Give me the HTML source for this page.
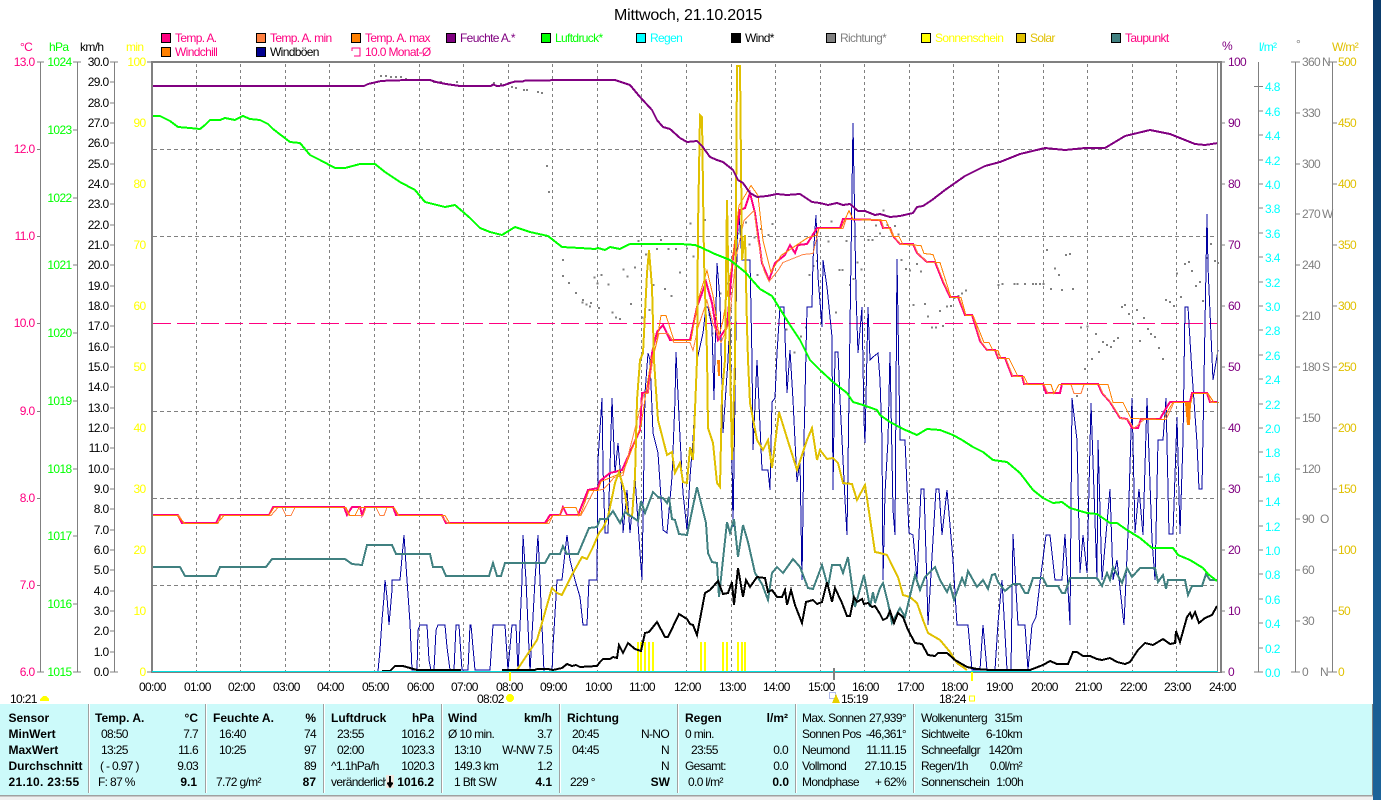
<!DOCTYPE html>
<html><head><meta charset="utf-8"><title>Mittwoch, 21.10.2015</title>
<style>
html,body{margin:0;padding:0;background:#fff;width:1381px;height:800px;overflow:hidden}
svg{display:block;shape-rendering:crispEdges}
text{font-family:"Liberation Sans",sans-serif;font-size:12px;letter-spacing:-.65px;white-space:pre}
.e{text-anchor:end}
.b{font-weight:bold;letter-spacing:0}
.c{letter-spacing:.3px}
.l{fill:none}
</style></head><body>
<svg width="1381" height="800" viewBox="0 0 1381 800" xmlns="http://www.w3.org/2000/svg">
<defs><linearGradient id="dk" x1="0" y1="0" x2="0" y2="1"><stop offset="0" stop-color="#0b3b6b"/><stop offset="1" stop-color="#1b6399"/></linearGradient></defs>
<rect x="1373" y="0" width="8" height="800" fill="url(#dk)"/>

<!-- title -->
<text x="614" y="20" style="font-size:16px;letter-spacing:-.2px" fill="#000">Mittwoch, 21.10.2015</text>

<!-- legend swatches -->
<g stroke="#000" stroke-width="1">
<rect x="161.5" y="33.5" width="9" height="9" fill="#ff0080"/>
<rect x="256.5" y="33.5" width="9" height="9" fill="#ff8040"/>
<rect x="351.5" y="33.5" width="9" height="9" fill="#ff8000"/>
<rect x="446.5" y="33.5" width="9" height="9" fill="#800080"/>
<rect x="541.5" y="33.5" width="9" height="9" fill="#00ff00"/>
<rect x="636.5" y="33.5" width="9" height="9" fill="#00ffff"/>
<rect x="731.5" y="33.5" width="9" height="9" fill="#000"/>
<rect x="826.5" y="33.5" width="9" height="9" fill="#808080"/>
<rect x="921.5" y="33.5" width="9" height="9" fill="#ffff00"/>
<rect x="1016.5" y="33.5" width="9" height="9" fill="#e0c000"/>
<rect x="1111.5" y="33.5" width="9" height="9" fill="#408080"/>
<rect x="161.5" y="47.5" width="9" height="9" fill="#ff8000"/>
<rect x="256.5" y="47.5" width="9" height="9" fill="#000090"/>
</g>
<path class="l" d="M352 51V48H360V56H354" stroke="#ff0080"/>
<g>
<text x="175" y="42" fill="#ff0080">Temp. A.</text>
<text x="270" y="42" fill="#ff0080">Temp. A. min</text>
<text x="365" y="42" fill="#ff0080">Temp. A. max</text>
<text x="460" y="42" fill="#800080">Feuchte A.*</text>
<text x="555" y="42" fill="#00ff00">Luftdruck*</text>
<text x="650" y="42" fill="#00ffff">Regen</text>
<text x="745" y="42" fill="#000">Wind*</text>
<text x="840" y="42" fill="#808080">Richtung*</text>
<text x="935" y="42" fill="#ffff00">Sonnenschein</text>
<text x="1030" y="42" fill="#e0c000">Solar</text>
<text x="1125" y="42" fill="#ff0080">Taupunkt</text>
<text x="175" y="56" fill="#ff0080">Windchill</text>
<text x="270" y="56" fill="#000">Windböen</text>
<text x="365" y="56" fill="#ff0080">10.0 Monat-Ø</text>
</g>

<!-- axis headers -->
<text x="20" y="51" fill="#ff0080">°C</text>
<text x="49" y="51" fill="#00ff00">hPa</text>
<text x="80" y="51" fill="#000">km/h</text>
<text x="126" y="51" fill="#ffff00">min</text>
<text x="1222" y="50" fill="#800080">%</text>
<text x="1259" y="51" fill="#00ffff">l/m²</text>
<text x="1296" y="48" fill="#808080">°</text>
<text x="1332" y="51" fill="#e0c000">W/m²</text>

<!-- left axis lines -->
<g fill="none" stroke="#808080" stroke-width="1">
<path d="M40.5 62V672M37 62H44M37 149.5H40M37 236.5H40M37 323.5H40M37 411.5H40M37 498.5H40M37 585.5H40M37 672H44"/>
<path d="M77.5 62V672M73 62H81M73 130H77M73 198H77M73 265H77M73 333H77M73 401H77M73 469H77M73 536H77M73 604H77M73 672H81"/>
<path d="M114.5 62V672M110 62H118M110 82H114M110 103H114M110 123H114M110 143H114M110 164H114M110 184H114M110 204H114M110 225H114M110 245H114M110 265H114M110 286H114M110 306H114M110 326H114M110 347H114M110 367H114M110 387H114M110 408H114M110 428H114M110 448H114M110 469H114M110 489H114M110 509H114M110 530H114M110 550H114M110 570H114M110 591H114M110 611H114M110 631H114M110 652H114M110 672H118"/>
<path d="M147 62H151M147 672H151"/>
</g>
<g class="e" fill="#ff0080">
<text class="e" x="34.5" y="66">13.0</text><text class="e" x="34.5" y="153">12.0</text><text class="e" x="34.5" y="240">11.0</text><text class="e" x="34.5" y="327">10.0</text><text class="e" x="34.5" y="415">9.0</text><text class="e" x="34.5" y="502">8.0</text><text class="e" x="34.5" y="589">7.0</text><text class="e" x="34.5" y="676">6.0</text>
</g>
<g fill="#00ff00">
<text class="e" x="71.5" y="66">1024</text><text class="e" x="71.5" y="134">1023</text><text class="e" x="71.5" y="202">1022</text><text class="e" x="71.5" y="269">1021</text><text class="e" x="71.5" y="337">1020</text><text class="e" x="71.5" y="405">1019</text><text class="e" x="71.5" y="473">1018</text><text class="e" x="71.5" y="540">1017</text><text class="e" x="71.5" y="608">1016</text><text class="e" x="71.5" y="676">1015</text>
</g>
<g fill="#000">
<text class="e" x="108.5" y="66">30.0</text><text class="e" x="108.5" y="86">29.0</text><text class="e" x="108.5" y="107">28.0</text><text class="e" x="108.5" y="127">27.0</text><text class="e" x="108.5" y="147">26.0</text><text class="e" x="108.5" y="168">25.0</text><text class="e" x="108.5" y="188">24.0</text><text class="e" x="108.5" y="208">23.0</text><text class="e" x="108.5" y="229">22.0</text><text class="e" x="108.5" y="249">21.0</text><text class="e" x="108.5" y="269">20.0</text><text class="e" x="108.5" y="290">19.0</text><text class="e" x="108.5" y="310">18.0</text><text class="e" x="108.5" y="330">17.0</text><text class="e" x="108.5" y="351">16.0</text><text class="e" x="108.5" y="371">15.0</text><text class="e" x="108.5" y="391">14.0</text><text class="e" x="108.5" y="412">13.0</text><text class="e" x="108.5" y="432">12.0</text><text class="e" x="108.5" y="452">11.0</text><text class="e" x="108.5" y="473">10.0</text><text class="e" x="108.5" y="493">9.0</text><text class="e" x="108.5" y="513">8.0</text><text class="e" x="108.5" y="534">7.0</text><text class="e" x="108.5" y="554">6.0</text><text class="e" x="108.5" y="574">5.0</text><text class="e" x="108.5" y="595">4.0</text><text class="e" x="108.5" y="615">3.0</text><text class="e" x="108.5" y="635">2.0</text><text class="e" x="108.5" y="656">1.0</text><text class="e" x="108.5" y="676">0.0</text>
</g>
<g fill="#ffff00">
<text class="e" x="145.5" y="66">100</text><text class="e" x="145.5" y="127">90</text><text class="e" x="145.5" y="188">80</text><text class="e" x="145.5" y="249">70</text><text class="e" x="145.5" y="310">60</text><text class="e" x="145.5" y="371">50</text><text class="e" x="145.5" y="432">40</text><text class="e" x="145.5" y="493">30</text><text class="e" x="145.5" y="554">20</text><text class="e" x="145.5" y="615">10</text><text class="e" x="145.5" y="676">0</text>
</g>

<!-- grid -->
<path class="l" stroke="#808080" stroke-dasharray="3 3" d="M196.5 64V676M240.5 64V676M285.5 64V676M329.5 64V676M374.5 64V676M419.5 64V676M463.5 64V676M508.5 64V676M552.5 64V676M597.5 64V676M641.5 64V676M686.5 64V676M731.5 64V676M775.5 64V676M820.5 64V676M864.5 64V676M909.5 64V676M953.5 64V676M998.5 64V676M1043.5 64V676M1087.5 64V676M1132.5 64V676M1176.5 64V676"/>
<path class="l" stroke="#808080" stroke-dasharray="4 3" d="M153 149.5H1218M153 236.5H1218M153 411.5H1218M153 498.5H1218M153 585.5H1218"/>
<path class="l" stroke="#ff0080" stroke-dasharray="18 6" d="M153 323.5H1218"/>

<!-- richtung dots -->
<g fill="none" stroke="#808080" stroke-width="2">
<path d="M380 76h2M385 76h2M390 77h2M395 77h2M400 77h2M405 79h2M433 82h2M440 82h2M456 82h2M493 83h2M500 84h2M503 85h2M511 87h2M515 88h2M523 90h2M526 90h2M537 92h2M541 93h2M546 166h2M548 192h2M562 260h2M562 276h2M568 283h2M575 293h2M582 300h2M590 303h2M598 308h2"/>
</g>
<path transform="translate(580,60) scale(.3333)" fill="none" stroke="#808080" stroke-width="6" d="M5 728h6M17 733h6M27 740h6M40 653h6M50 670h6M62 645h6M83 673h6M95 758h6M105 773h6M117 777h6M128 629h6M140 650h6M150 732h6M162 623h6M173 543h6M185 773h6M195 584h6M205 750h6M218 675h6M228 567h6M240 540h6M252 687h6M262 567h6M272 708h6M285 567h6M297 638h6M318 565h6M328 490h6M338 590h6M350 635h6M362 705h6M372 480h6M385 765h6M395 820h6M405 765h6M418 700h6M430 760h6M440 670h6M450 745h6M462 570h6M472 520h6M485 573h6M495 488h6M505 553h6M520 533h6M530 645h6M540 507h6M562 525h6M575 492h6M597 752h6M617 808h6M640 878h6M660 830h6M675 803h6M685 645h6M697 618h6M708 603h6M720 760h6M742 545h6M752 485h6M765 758h6M775 630h6M785 630h6M797 543h6M807 675h6M818 657h6M830 608h6M842 628h6M862 540h6M875 540h6M885 497h6M897 520h6"/>
<path transform="translate(880,200) scale(.3333)" fill="none" stroke="#808080" stroke-width="6" d="M8 32h6M20 75h6M42 78h6M53 103h6M62 180h6M75 207h6M87 212h6M98 315h6M108 192h6M120 215h6M132 312h6M141 350h6M153 383h6M165 383h6M177 333h6M186 378h6M198 320h6M210 318h6M220 294h6M232 288h6M243 280h6M255 272h6M353 255h6M365 252h6M400 252h6M410 252h6M432 252h6M456 252h6M465 252h6M477 252h6M488 252h6M498 150h6M510 267h6M522 205h6M534 225h6M543 270h6M555 165h6M567 162h6M576 267h6M588 588h6M600 383h6M612 507h6M620 380h6M633 477h6M645 402h6M654 456h6M666 426h6M678 435h6M690 441h6M699 423h6M711 414h6M723 321h6M732 315h6M744 342h6M756 372h6M768 330h6M777 423h6M789 354h6M801 387h6M810 402h6M822 411h6M834 444h6M846 477h6M855 300h6M867 306h6M879 318h6M888 220h6M900 291h6M912 192h6M924 186h6M933 213h6M945 258h6M957 246h6M966 303h6M978 174h6M990 132h6M1002 183h6M1011 189h6"/>

<!-- sunshine -->
<g fill="#ffff00">
<rect x="637" y="642" width="2" height="30"/><rect x="640" y="642" width="2" height="30"/><rect x="644" y="642" width="2" height="30"/><rect x="648" y="642" width="2" height="30"/><rect x="652" y="642" width="2" height="30"/>
<rect x="700" y="642" width="2" height="30"/><rect x="704" y="642" width="2" height="30"/>
<rect x="722" y="642" width="2" height="30"/><rect x="726" y="642" width="2" height="30"/>
<rect x="737" y="642" width="2" height="30"/><rect x="741" y="642" width="2" height="30"/><rect x="744" y="642" width="2" height="30"/>
</g>

<!-- gusts -->
<polyline class="l" stroke="#0000a0" stroke-width="1" points="378,671 380,650 382,620 384,597 385,580 387,597 389,625 392,590 392,580 400,580 404,535 407,580 410,623 412,670 417,670 418,630 420,625 427,625 429,660 431,670 434,670 436,630 438,625 445,625 447,647 450,670 454,670 456,625 459,625 462,670 468,670 470,625 471,625 475,670 490,670 493,625 505,625 508,670 510,647 512,625 516,625 518,672 522,580 523,535 526,580 530,672 535,580 538,535 540,580 544,672 552,672 553,647 557,580 562,580 567,535 570,560 575,580 580,597 583,625 587,625 589,580 597,580 598,460 602,398 603,467 605,533 608,533 610,467 612,398 615,473 618,443 622,493 623,533 627,490 630,533 635,477 640,553 642,580 645,393 648,353 650,360 653,433 658,453 660,483 663,530 667,533 672,477 675,400 676,352 680,437 683,493 687,530 690,477 693,440 697,360 703,333 706,307 708,307 712,327 714,400 717,263 720,300 723,433 728,360 730,310 733,527 735,400 737,243 739,213 742,260 750,260 752,360 753,450 757,360 762,470 768,470 770,490 772,402 775,398 777,353 780,307 784,307 787,393 790,350 793,400 797,482 800,460 802,580 804,440 807,307 812,307 813,260 816,215 818,277 822,327 823,260 827,287 832,337 833,490 835,352 838,352 840,400 845,500 847,535 850,327 853,123 856,293 858,353 862,307 864,420 865,443 868,307 870,360 873,357 878,353 880,380 882,440 883,580 885,493 888,440 890,352 893,510 895,535 897,259 900,440 905,440 909,533 913,535 917,580 921,489 924,489 927,587 928,625 933,540 936,489 939,489 942,535 947,490 953,560 957,625 968,625 972,670 980,670 983,625 987,670 995,670 998,623 1002,580 1007,670 1011,670 1013,534 1018,625 1025,625 1028,670 1032,625 1036,617 1040,582 1046,535 1050,535 1055,580 1062,580 1065,534 1070,625 1072,398 1077,440 1080,573 1083,535 1087,573 1091,403 1097,580 1098,440 1102,580 1110,489 1113,580 1117,560 1124,625 1128,533 1132,398 1135,533 1139,489 1143,535 1147,398 1152,540 1155,580 1158,440 1163,440 1166,398 1169,534 1173,534 1177,417 1180,534 1183,440 1185,307 1188,307 1192,373 1197,443 1199,489 1202,489 1207,214 1208,267 1213,380 1218,350"/>

<!-- temp -->
<polyline class="l" stroke="#ff0080" stroke-width="2" points="152,515 178,515 182,523 216,523 220,515 269,515 273,507 344,507 347,515 352,507 360,507 362,515 365,507 393,507 396,515 442,515 446,523 545,523 550,515 560,515 563,507 567,515 578,515 588,490 598,488 600,481 610,473 622,470 640,430 642,393 648,392 652,353 657,332 663,325 670,340 690,340 697,307 706,282 712,303 718,340 727,327 733,257 740,210 745,208 750,193 755,213 762,263 769,280 775,263 785,255 790,245 795,253 798,245 807,244 817,228 840,228 843,219 880,220 883,228 890,228 893,236 900,244 913,244 917,253 927,262 935,262 943,282 950,297 958,297 965,315 972,315 980,341 987,350 995,350 998,358 1005,358 1012,376 1022,376 1024,384 1043,384 1046,393 1060,393 1062,384 1098,384 1102,393 1110,402 1120,418 1127,419 1132,428 1138,428 1141,419 1160,419 1165,410 1170,402 1190,402 1192,393 1207,393 1210,402 1218,402"/>
<!-- temp min -->
<polyline class="l" transform="translate(1,.5)" stroke="#ff8040" points="152,515 178,515 183,523 217,523 220,515 270,515 277,507 281,507 285,515 290,515 294,507 344,507 348,515 362,515 365,507 375,507 379,515 383,515 386,507 393,507 397,515 440,515 447,523 548,523 552,515 578,515 580,515 593,490 602,489 608,483 613,477 622,475 643,393 647,393 652,357 658,333 667,333 673,342 689,342 692,350 697,327 706,300 712,323 720,342 728,323 735,257 743,220 753,210 757,240 763,270 768,281 777,270 782,262 802,254 812,253 818,228 842,228 845,219 880,219 883,228 890,228 893,236 900,244 913,244 917,253 927,262 935,262 943,282 950,297 958,297 965,315 972,315 980,341 987,350 995,350 998,358 1005,358 1012,376 1022,376 1024,384 1043,384 1047,393 1053,393 1058,384 1070,384 1073,393 1080,393 1083,384 1098,384 1102,393 1110,402 1120,418 1127,419 1133,428 1143,419 1165,419 1173,402 1190,402 1192,393 1207,393 1210,402 1218,402"/>
<!-- temp max -->
<polyline class="l" transform="translate(1,.5)" stroke="#ff8000" points="152,515 176,515 184,523 216,523 223,515 268,515 273,507 345,507 349,515 354,515 358,507 393,507 398,515 444,515 449,523 545,523 552,515 558,515 562,507 575,507 578,515 580,513 588,490 597,490 600,481 622,472 640,425 645,392 650,360 655,345 660,315 665,315 673,340 690,340 697,300 706,270 712,295 718,335 722,320 730,270 738,205 750,185 757,195 762,240 770,272 780,255 795,245 807,237 815,235 818,228 840,228 848,210 852,219 885,220 892,236 898,236 902,244 920,245 923,253 932,254 935,262 939,262 950,297 960,297 965,315 972,315 983,342 988,342 992,350 997,350 1000,358 1008,358 1017,376 1023,376 1027,384 1050,384 1053,393 1058,384 1107,384 1112,402 1122,402 1130,418 1163,419 1167,410 1172,402 1190,402 1192,393 1207,393 1213,402 1218,402"/>
<path d="M717 360h3v16h-2zM1185 403h6l-1 22h-3z" fill="#ff8000"/>

<!-- solar -->
<polyline class="l" stroke="#e0c000" stroke-width="2" points="517,670 537,640 542,623 552,588 557,593 562,595 573,573 582,557 587,559 593,547 599,533 603,528 608,517 615,483 619,472 625,493 628,515 632,517 635,477 637,400 640,360 643,353 647,273 649,250 652,287 654,360 658,420 667,455 672,452 675,473 680,463 683,482 687,483 690,447 693,460 697,360 698,227 700,115 702,117 704,260 707,353 708,428 713,443 717,483 720,487 722,393 725,360 727,200 728,260 730,357 732,460 735,360 737,66 740,66 742,260 745,235 747,327 748,360 750,403 757,440 763,450 768,440 772,468 779,412 787,438 797,470 807,440 812,428 817,460 820,450 827,459 833,458 838,463 843,483 852,484 857,500 865,485 875,552 880,553 887,555 898,577 903,595 910,597 917,603 923,620 928,633 940,640 950,652 957,663 967,670"/>

<!-- dew -->
<polyline class="l" stroke="#408080" stroke-width="2" points="152,567 180,567 185,576 216,576 220,567 266,567 272,559 345,559 352,564 362,565 367,545 392,545 396,554 430,554 433,567 442,567 446,576 489,576 493,563 497,576 501,576 505,563 545,563 550,554 560,554 563,546 567,554 578,554 589,528 597,527 600,519 607,519 613,511 620,523 625,512 638,521 641,501 645,513 653,492 658,497 663,498 667,503 669,497 672,519 675,520 679,534 687,535 697,487 706,523 708,553 712,562 717,563 719,597 727,522 730,533 734,519 738,557 743,525 748,542 755,573 762,584 768,600 772,573 777,567 783,573 793,559 800,567 808,588 813,589 822,565 828,587 832,565 840,565 843,573 848,557 855,607 864,575 870,607 873,592 875,603 880,588 883,583 888,603 892,623 900,608 905,617 915,575 920,590 925,577 935,567 940,580 947,592 950,585 954,600 962,578 965,585 968,571 977,587 983,580 988,589 992,575 995,574 998,582 1005,591 1013,584 1020,584 1025,593 1028,593 1033,578 1043,578 1047,586 1058,586 1062,593 1065,593 1070,578 1097,578 1102,586 1107,573 1110,580 1113,567 1122,583 1127,568 1132,577 1140,568 1155,568 1158,582 1163,575 1166,589 1168,580 1185,580 1188,595 1192,586 1202,586 1206,574 1210,580 1217,580"/>

<!-- wind -->
<polyline class="l" stroke="#000" stroke-width="2" points="382,671 390,671 395,666 403,666 410,668 417,670 461,670"/>
<polyline class="l" stroke="#000" stroke-width="2" points="502,670 535,670 537,669 548,669 553,670 562,668 567,664 572,666 576,665 580,667 597,666 600,662 603,659 610,659 613,657 617,658 619,645 623,653 628,643 635,649 641,651 645,633 649,632 657,622 665,637 668,637 679,614 687,619 690,624 693,625 697,635 705,593 710,590 718,581 723,594 728,593 732,582 734,605 738,568 743,597 746,580 750,587 757,577 765,578 768,592 772,590 777,597 782,597 785,590 787,605 791,590 795,605 802,623 806,602 813,600 817,604 822,602 827,582 832,602 835,588 842,603 847,616 850,616 854,597 857,602 862,599 864,604 868,603 872,607 875,606 880,614 883,620 887,618 890,611 894,623 898,613 903,617 908,630 915,643 922,644 928,655 935,656 938,653 947,653 955,660 967,667 977,669 990,670 1030,670 1043,665 1050,661 1057,664 1068,664 1073,652 1077,652 1083,656 1090,656 1097,659 1102,660 1110,658 1117,662 1125,664 1130,662 1138,650 1145,643 1153,645 1163,639 1170,644 1175,643 1176,631 1180,642 1187,617 1190,613 1192,618 1195,612 1199,623 1205,618 1212,615 1217,606"/>

<!-- pressure -->
<polyline class="l" stroke="#00ff00" stroke-width="2" points="152,116 160,116 170,121 178,127 190,128 200,129 205,125 210,120 220,120 225,118 235,120 243,116 250,119 260,120 268,124 273,129 290,142 300,143 310,155 320,160 335,168 345,168 360,164 375,164 385,172 400,182 415,190 425,202 445,207 455,205 470,218 480,228 490,232 502,235 515,227 530,232 548,236 562,247 580,248 595,249 598,248 605,250 610,247 620,249 630,244 650,244 680,244 695,245 700,247 715,254 730,260 745,272 760,289 772,296 790,325 800,340 810,360 820,370 833,382 847,393 853,402 863,405 877,410 880,415 890,422 903,429 917,435 927,429 940,430 953,435 962,440 973,447 983,452 993,460 1007,462 1020,473 1033,490 1043,498 1053,503 1062,502 1070,508 1087,513 1097,514 1110,523 1117,523 1127,530 1140,538 1152,548 1173,548 1178,555 1190,560 1203,568 1208,574 1217,581"/>

<!-- humidity -->
<polyline class="l" stroke="#800080" stroke-width="2" points="152,86 364,86 368,84 381,81 390,80.5 411,80 430,80 436,82 446,84 460,86 491,86 493,84.5 497,86 503,85.5 510,83 515,81.5 523,81.5 525,80.5 550,80.5 551,80 615,80 630,85 640,97 652,110 657,120 663,127 670,129 680,138 687,142 697,141 702,146 710,157 717,160 723,162 733,170 738,180 743,183 750,193 757,197 767,196 777,194 787,195 800,194 812,202 820,203 828,205 837,203 843,205 850,204 858,211 865,211 875,215 880,214 890,217 900,216 913,213 917,207 923,206 932,200 945,190 965,176 985,166 1000,162 1020,154 1045,148 1065,150 1085,148 1105,148 1125,136 1150,130 1170,134 1195,144 1205,145 1218,143"/>

<!-- plot frame -->
<rect x="151" y="61" width="2" height="612" fill="#808080"/>
<rect x="151" y="61" width="1071" height="2" fill="#808080"/>
<rect x="1220" y="61" width="2" height="612" fill="#808080"/>
<rect x="1217" y="63" width="1" height="609" fill="#808080"/>
<rect x="152" y="672" width="1070" height="1" fill="#808080"/>
<rect x="152" y="671" width="1066" height="1" fill="#00e0e0"/>

<!-- right axis ticks -->
<g fill="none" stroke="#808080">
<path d="M1221 62H1225M1221 123H1225M1221 184H1225M1221 245H1225M1221 306H1225M1221 367H1225M1221 428H1225M1221 489H1225M1221 550H1225M1221 611H1225M1221 672H1225"/>
<path d="M1258.5 62V672M1254 86.5H1263M1259 111H1263M1259 135H1263M1259 160H1263M1259 184H1263M1259 208H1263M1259 233H1263M1259 257H1263M1259 282H1263M1259 306H1263M1259 330H1263M1259 355H1263M1259 379H1263M1259 404H1263M1259 428H1263M1259 452H1263M1259 477H1263M1259 501H1263M1259 526H1263M1259 550H1263M1259 574H1263M1259 599H1263M1259 623H1263M1259 648H1263M1254 672H1263"/>
<path d="M1295.5 62V672M1291 62H1300M1296 113H1300M1296 164H1300M1296 214H1300M1296 265H1300M1296 316H1300M1296 367H1300M1296 418H1300M1296 469H1300M1296 519H1300M1296 570H1300M1296 621H1300M1291 672H1300"/>
<path d="M1332.5 62V672M1328 62H1337M1333 123H1337M1333 184H1337M1333 245H1337M1333 306H1337M1333 367H1337M1333 428H1337M1333 489H1337M1333 550H1337M1333 611H1337M1328 672H1337"/>
</g>
<g fill="#800080">
<text x="1228" y="66">100</text><text x="1228" y="127">90</text><text x="1228" y="188">80</text><text x="1228" y="249">70</text><text x="1228" y="310">60</text><text x="1228" y="371">50</text><text x="1228" y="432">40</text><text x="1228" y="493">30</text><text x="1228" y="554">20</text><text x="1228" y="615">10</text><text x="1228" y="676">0</text>
</g>
<g fill="#00ffff">
<text x="1265" y="91">4.8</text><text x="1265" y="116">4.6</text><text x="1265" y="140">4.4</text><text x="1265" y="165">4.2</text><text x="1265" y="189">4.0</text><text x="1265" y="213">3.8</text><text x="1265" y="238">3.6</text><text x="1265" y="262">3.4</text><text x="1265" y="287">3.2</text><text x="1265" y="311">3.0</text><text x="1265" y="335">2.8</text><text x="1265" y="360">2.6</text><text x="1265" y="384">2.4</text><text x="1265" y="409">2.2</text><text x="1265" y="433">2.0</text><text x="1265" y="457">1.8</text><text x="1265" y="482">1.6</text><text x="1265" y="506">1.4</text><text x="1265" y="531">1.2</text><text x="1265" y="555">1.0</text><text x="1265" y="579">0.8</text><text x="1265" y="604">0.6</text><text x="1265" y="628">0.4</text><text x="1265" y="653">0.2</text><text x="1265" y="677">0.0</text>
</g>
<g fill="#808080">
<text x="1302" y="66">360</text><text x="1322" y="66">N</text>
<text x="1302" y="117">330</text><text x="1302" y="168">300</text>
<text x="1302" y="218">270</text><text x="1322" y="218">W</text>
<text x="1302" y="269">240</text><text x="1302" y="320">210</text>
<text x="1302" y="371">180</text><text x="1322" y="371">S</text>
<text x="1302" y="422">150</text><text x="1302" y="473">120</text>
<text x="1302" y="523">90</text><text x="1320" y="523">O</text>
<text x="1302" y="574">60</text><text x="1302" y="625">30</text>
<text x="1302" y="676">0</text><text x="1320" y="676">N</text>
</g>
<g fill="#e0c000">
<text x="1338" y="66">500</text><text x="1338" y="127">450</text><text x="1338" y="188">400</text><text x="1338" y="249">350</text><text x="1338" y="310">300</text><text x="1338" y="371">250</text><text x="1338" y="432">200</text><text x="1338" y="493">150</text><text x="1338" y="554">100</text><text x="1338" y="615">50</text><text x="1338" y="676">0</text>
</g>

<!-- time labels -->
<g fill="#000">
<text x="139" y="691">00:00</text><text x="184" y="691">01:00</text><text x="228" y="691">02:00</text><text x="273" y="691">03:00</text><text x="317" y="691">04:00</text><text x="362" y="691">05:00</text><text x="407" y="691">06:00</text><text x="451" y="691">07:00</text><text x="496" y="691">08:00</text><text x="540" y="691">09:00</text><text x="585" y="691">10:00</text><text x="629" y="691">11:00</text><text x="674" y="691">12:00</text><text x="719" y="691">13:00</text><text x="763" y="691">14:00</text><text x="808" y="691">15:00</text><text x="852" y="691">16:00</text><text x="897" y="691">17:00</text><text x="941" y="691">18:00</text><text x="986" y="691">19:00</text><text x="1031" y="691">20:00</text><text x="1075" y="691">21:00</text><text x="1120" y="691">22:00</text><text x="1164" y="691">23:00</text><text x="1209" y="691">24:00</text>
<text x="10" y="703">10:21</text><text x="477" y="703">08:02</text><text x="841" y="703">15:19</text><text x="939" y="703">18:24</text>
</g>
<rect x="509" y="672" width="2" height="9" fill="#ffff00"/>
<rect x="971" y="672" width="2" height="9" fill="#ffff00"/>
<rect x="833" y="668" width="2" height="12" fill="#808080"/>
<path d="M40 701V699L43 696H46L49 699V701Z" fill="#ffff00"/>
<circle cx="510" cy="698" r="4" fill="#ffff00"/>
<rect x="829.5" y="692.5" width="6" height="6" fill="none" stroke="#6070d0" stroke-dasharray="1 1"/>
<path d="M836 694L840 703H832Z" fill="#e8d000"/>
<rect x="969.5" y="696" width="5" height="5" fill="none" stroke="#ffff00"/>

<!-- info panel -->
<rect x="0" y="704" width="1373" height="91" fill="#ccfafa"/>
<rect x="1372" y="704" width="1" height="91" fill="#808080"/>
<rect x="0" y="795" width="1373" height="5" fill="#f0f0f0"/>
<rect x="0" y="795" width="1373" height="1" fill="#a0a0a0"/>
<rect x="0" y="796" width="1373" height="1" fill="#a0a0a0" opacity=".5"/>
<g fill="#a0a0a0">
<rect x="88" y="704" width="1" height="89"/><rect x="205" y="704" width="1" height="89"/><rect x="323" y="704" width="1" height="89"/><rect x="441" y="704" width="1" height="89"/><rect x="559" y="704" width="1" height="89"/><rect x="677" y="704" width="1" height="89"/><rect x="795" y="704" width="1" height="89"/><rect x="913" y="704" width="1" height="89"/>
</g>
<g fill="#fff">
<rect x="89" y="704" width="1" height="89"/><rect x="206" y="704" width="1" height="89"/><rect x="324" y="704" width="1" height="89"/><rect x="442" y="704" width="1" height="89"/><rect x="560" y="704" width="1" height="89"/><rect x="678" y="704" width="1" height="89"/><rect x="796" y="704" width="1" height="89"/><rect x="914" y="704" width="1" height="89"/>
</g>
<g fill="#000">
<text class="b" x="8.5" y="722">Sensor</text><text class="b" x="8.5" y="738">MinWert</text><text class="b" x="8.5" y="754">MaxWert</text><text class="b" x="8.5" y="770">Durchschnitt</text><text class="b c" x="8.5" y="786">21.10. 23:55</text>

<text class="b" x="95" y="722">Temp. A.</text><text class="b e" x="198" y="722">°C</text>
<text x="101" y="738">08:50</text><text class="e" x="198" y="738">7.7</text>
<text x="101" y="754">13:25</text><text class="e" x="198" y="754">11.6</text>
<text x="100" y="770">( - 0.97 )</text><text class="e" x="198" y="770">9.03</text>
<text x="98" y="786">F: 87 %</text><text class="b e" x="197" y="786">9.1</text>

<text class="b" x="213" y="722">Feuchte A.</text><text class="b e" x="316" y="722">%</text>
<text x="219" y="738">16:40</text><text class="e" x="316" y="738">74</text>
<text x="219" y="754">10:25</text><text class="e" x="316" y="754">97</text>
<text class="e" x="316" y="770">89</text>
<text x="216" y="786">7.72 g/m²</text><text class="b e" x="316" y="786">87</text>

<text class="b" x="331" y="722">Luftdruck</text><text class="b e" x="434" y="722">hPa</text>
<text x="337" y="738">23:55</text><text class="e" x="434" y="738">1016.2</text>
<text x="337" y="754">02:00</text><text class="e" x="434" y="754">1023.3</text>
<text x="331" y="770">^1.1hPa/h</text><text class="e" x="434" y="770">1020.3</text>
<text x="331" y="786">veränderlich</text>
<rect x="386" y="775" width="8" height="13" fill="#f0e8e0"/>
<path d="M390 776V786M387.5 782.5L390 786.5L392.5 782.5" fill="none" stroke="#000" stroke-width="2"/>
<text class="b e" x="434" y="786">1016.2</text>

<text class="b" x="448" y="722">Wind</text><text class="b e" x="552" y="722">km/h</text>
<text x="448" y="738">Ø 10 min.</text><text class="e" x="552" y="738">3.7</text>
<text x="454" y="754">13:10</text><text class="e" x="552" y="754">W-NW 7.5</text>
<text x="454" y="770">149.3 km</text><text class="e" x="552" y="770">1.2</text>
<text x="454" y="786">1 Bft SW</text><text class="b e" x="552" y="786">4.1</text>

<text class="b" x="567" y="722">Richtung</text>
<text x="572" y="738">20:45</text><text class="e" x="669" y="738">N-NO</text>
<text x="572" y="754">04:45</text><text class="e" x="669" y="754">N</text>
<text class="e" x="669" y="770">N</text>
<text x="570" y="786">229 °</text><text class="b e" x="670" y="786">SW</text>

<text class="b" x="685" y="722">Regen</text><text class="b e" x="788" y="722">l/m²</text>
<text x="685" y="738">0 min.</text>
<text x="691" y="754">23:55</text><text class="e" x="788" y="754">0.0</text>
<text x="685" y="770">Gesamt:</text><text class="e" x="788" y="770">0.0</text>
<text x="688" y="786">0.0 l/m²</text><text class="b e" x="789" y="786">0.0</text>

<text x="802" y="722">Max. Sonnen</text><text class="e" x="906" y="722">27,939°</text>
<text x="802" y="738">Sonnen Pos</text><text class="e" x="906" y="738">-46,361°</text>
<text x="802" y="754">Neumond</text><text class="e" x="906" y="754">11.11.15</text>
<text x="802" y="770">Vollmond</text><text class="e" x="906" y="770">27.10.15</text>
<text x="802" y="786">Mondphase</text><text class="e" x="906" y="786">+ 62%</text>

<text x="921" y="722">Wolkenunterg</text><text class="e" x="1022" y="722">315m</text>
<text x="921" y="738">Sichtweite</text><text class="e" x="1022" y="738">6-10km</text>
<text x="921" y="754">Schneefallgr</text><text class="e" x="1022" y="754">1420m</text>
<text x="921" y="770">Regen/1h</text><text class="e" x="1022" y="770">0.0l/m²</text>
<text x="921" y="786">Sonnenschein</text><text class="e" x="1023" y="786">1:00h</text>
</g>
</svg>
</body></html>
